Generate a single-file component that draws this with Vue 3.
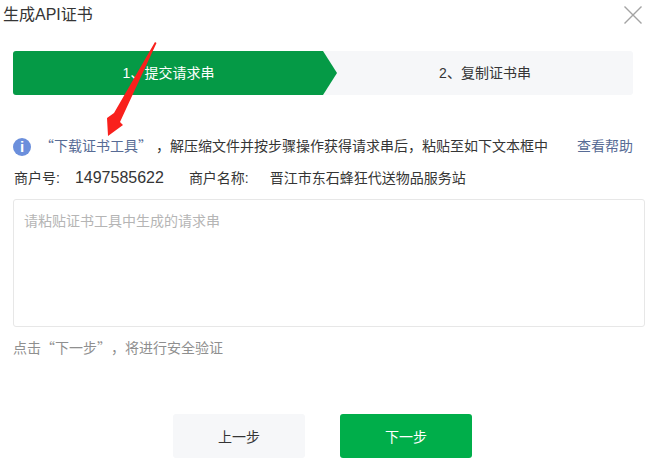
<template>
  <div class="dialog">
    <div class="dialog-header">
      <h3 class="dialog-title">生成API证书</h3>
      <button class="close-btn" type="button" aria-label="关闭">
        <svg width="20" height="20" viewBox="0 0 20 20">
          <path d="M1.5 1.5L18.5 18.5M18.5 1.5L1.5 18.5" stroke="#a3a3a3" stroke-width="1.4" fill="none" />
        </svg>
      </button>
    </div>

    <div class="steps">
      <div class="step step-active">1、提交请求串</div>
      <div class="step">2、复制证书串</div>
    </div>

    <div class="tip-row">
      <span class="info-icon">i</span>
      <span class="tip-text"><a class="link">“下载证书工具”</a><span class="tip-comma">，</span>解压缩文件并按步骤操作获得请求串后，粘贴至如下文本框中</span>
      <a class="link help-link">查看帮助</a>
    </div>

    <div class="merchant-row">
      <span>商户号:</span>
      <span class="merchant-id">1497585622</span>
      <span class="name-label">商户名称:</span>
      <span>晋江市东石蜂狂代送物品服务站</span>
    </div>

    <textarea class="req-input" placeholder="请粘贴证书工具中生成的请求串"></textarea>
    <p class="hint">点击“下一步”<span class="hint-comma">，</span>将进行安全验证</p>

    <div class="footer">
      <button class="btn btn-secondary" type="button">上一步</button>
      <button class="btn btn-primary" type="button">下一步</button>
    </div>

    <svg class="red-arrow" width="60" height="100" viewBox="0 0 60 100">
      <path d="M52 1L53.5 2L17 81L20 84L5 95L4 77L11 72Z" fill="#f9201c" />
    </svg>
  </div>
</template>

<script setup>
</script>

<style>
html,
body {
  margin: 0;
  background: #fff;
}
</style>

<style scoped>
.dialog {
  position: relative;
  width: 646px;
  height: 469px;
  overflow: hidden;
  background: #fff;
  color: #353535;
  font-family: "Liberation Sans", "Noto Sans CJK SC", sans-serif;
  font-size: 14px;
}

.dialog-header {
  display: flex;
  justify-content: space-between;
  align-items: flex-start;
  height: 51px;
  padding: 5px 3px 0 3px;
  box-sizing: border-box;
}

.dialog-title {
  margin: 0;
  font-size: 16px;
  font-weight: 400;
  line-height: 20px;
  color: #353535;
}

.close-btn {
  width: 20px;
  height: 20px;
  padding: 0;
  border: none;
  background: none;
  cursor: pointer;
}

.steps {
  display: flex;
  width: 620px;
  height: 44px;
  margin-left: 13px;
  background: #f6f7f9;
  border-radius: 3px;
}

.step {
  flex: 1;
  display: flex;
  align-items: center;
  justify-content: center;
  line-height: 44px;
}

.step-active {
  flex: none;
  width: 324px;
  padding-right: 13px;
  box-sizing: border-box;
  color: #fff;
  background: #059a46;
  border-radius: 3px 0 0 3px;
  clip-path: polygon(0 0, 310px 0, 100% 50%, 310px 100%, 0 100%);
}

.tip-row {
  display: flex;
  align-items: center;
  height: 20px;
  margin: 40px 13px 0;
  width: 620px;
}

.info-icon {
  width: 18px;
  height: 18px;
  margin-top: 4px;
  border-radius: 50%;
  background: #6b8fdc;
  color: #fff;
  font-size: 15px;
  font-weight: 700;
  line-height: 18px;
  text-align: center;
}

.tip-text {
  margin-left: 9px;
  white-space: nowrap;
  font-family: "Noto Sans CJK SC", sans-serif;
}

.tip-comma {
  margin-left: 11px;
}

.link {
  color: #576b95;
  cursor: pointer;
}

.help-link {
  margin-left: auto;
}

.merchant-row {
  display: flex;
  align-items: baseline;
  height: 20px;
  margin: 12px 14px 0;
  white-space: nowrap;
}

.merchant-id {
  margin-left: 15px;
  font-size: 16px;
}

.name-label {
  margin-left: 25px;
  margin-right: 21px;
}

.req-input {
  display: block;
  width: 632px;
  height: 128px;
  margin: 12px 0 0 13px;
  padding: 11px 10px;
  box-sizing: border-box;
  border: 1px solid #e7e7e7;
  border-radius: 3px;
  outline: none;
  resize: none;
  font: inherit;
  line-height: 20px;
}

.req-input::placeholder {
  color: #b5b5b5;
  opacity: 1;
}

.hint {
  margin: 10px 0 0 13px;
  line-height: 20px;
  color: #8f8f8f;
  font-family: "Noto Sans CJK SC", sans-serif;
}

.hint-comma {
  margin-left: 7px;
}

.footer {
  display: flex;
  gap: 35px;
  margin: 57px 0 0 173px;
}

.btn {
  width: 132px;
  height: 44px;
  border: none;
  border-radius: 3px;
  font: inherit;
  cursor: pointer;
}

.btn-secondary {
  background: #f6f7f9;
  color: #353535;
}

.btn-primary {
  background: #00ae4a;
  color: #fff;
}

.red-arrow {
  position: absolute;
  left: 103px;
  top: 41px;
}
</style>
